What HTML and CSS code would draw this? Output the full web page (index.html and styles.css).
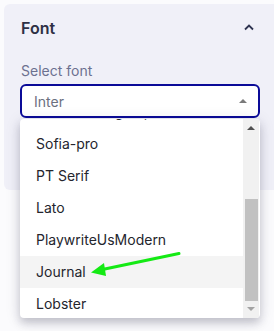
FILE: index.html
```html
<!DOCTYPE html>
<html>
<head>
<meta charset="utf-8">
<link rel="stylesheet" href="styles.css">
</head>
<body>
<div class="page">
  <section class="panel">
    <div class="panel-head">
      <h2 class="title">Font</h2>
      <svg class="chev" width="12" height="8" viewBox="0 0 12 8"><path d="M2 6.5 L6 2.5 L10 6.5" fill="none" stroke="#2e3350" stroke-width="1.8"/></svg>
    </div>
    <label class="label">Select font</label>
    <div class="select-wrap">
      <div class="select">
        <span class="value">Inter</span>
        <span class="caret"></span>
      </div>
      <div class="dropdown">
        <ul class="options">
          <li class="opt">Montserrat-grasp</li>
          <li class="opt">Sofia-pro</li>
          <li class="opt">PT Serif</li>
          <li class="opt">Lato</li>
          <li class="opt">PlaywriteUsModern</li>
          <li class="opt hover">Journal</li>
          <li class="opt">Lobster</li>
        </ul>
        <div class="scrollbar">
          <span class="sb-up"></span>
          <span class="sb-thumb"></span>
          <span class="sb-down"></span>
        </div>
      </div>
    </div>
  </section>
  <svg class="arrow" width="274" height="331" viewBox="0 0 274 331">
    <line x1="179" y1="253.5" x2="100" y2="270" stroke="#14ea14" stroke-width="3" stroke-linecap="round"/>
    <polygon points="91,272.5 104,263 106,276" fill="#14ea14"/>
  </svg>
</div>
</body>
</html>
```

FILE: styles.css
```css
* { box-sizing: border-box; }
html, body { margin: 0; padding: 0; }
body {
  background: #fbfbfd;
  font-family: Inter, "Noto Sans", sans-serif;
  width: 274px;
  height: 331px;
  overflow: hidden;
}
.page {
  position: relative;
  padding: 4px 0 0 4px;
  height: 331px;
}
.panel {
  background: #f0f0f8;
  border-radius: 6px 0 0 6px;
  height: 186px;
  padding: 12px 14px 0 16px;
}
.panel-head {
  display: flex;
  align-items: center;
  justify-content: space-between;
  height: 24px;
}
.title {
  margin: 0 0 0 1px;
  font-size: 16px;
  font-weight: 600;
  color: #2d2f45;
  line-height: 24px;
}
.chev { margin-right: 5px; margin-top: -2px; }
.label {
  display: block;
  margin-top: 21px;
  margin-left: 1px;
  font-size: 14px;
  line-height: 20px;
  color: #6c7190;
}
.select-wrap {
  position: relative;
  margin-top: 3px;
  width: 240px;
}
.select {
  height: 34px;
  border: 2px solid #0b0b98;
  border-radius: 6px;
  background: #fff;
  display: flex;
  align-items: center;
  justify-content: space-between;
  padding: 0 11px 0 12px;
}
.value {
  font-size: 14px;
  color: #6b7080;
}
.caret {
  width: 0; height: 0;
  border-left: 4px solid transparent;
  border-right: 4px solid transparent;
  border-bottom: 4px solid #7a7a7a;
}
.dropdown {
  position: absolute;
  left: 0;
  top: 35px;
  width: 240px;
  height: 199px;
  background: #fff;
  border-radius: 4px;
  box-shadow: 0 5px 8px rgba(40,40,70,0.22), 0 2px 16px rgba(40,40,70,0.12);
  overflow: hidden;
  display: flex;
}
.options {
  list-style: none;
  margin: -23px 0 0 0;
  padding: 0;
  flex: 1;
}
.opt {
  height: 32px;
  line-height: 32px;
  padding-left: 16px;
  font-size: 14px;
  color: #24252d;
  white-space: nowrap;
}
.opt.hover { background: #f4f4f4; }
.scrollbar {
  width: 16px;
  background: #f1f1f1;
  margin-right: 1px;
  position: relative;
  display: flex;
  flex-direction: column;
  align-items: center;
}
.sb-up {
  margin-top: 7px;
  width: 0; height: 0;
  border-left: 4px solid transparent;
  border-right: 4px solid transparent;
  border-bottom: 4px solid #505050;
}
.sb-thumb {
  margin-top: 69px;
  width: 13px;
  height: 102px;
  background: #c1c1c1;
}
.sb-down {
  margin-top: 6px;
  width: 0; height: 0;
  border-left: 4px solid transparent;
  border-right: 4px solid transparent;
  border-top: 4px solid #a3a3a3;
}
.arrow {
  position: absolute;
  left: 0; top: 0;
  pointer-events: none;
}
```
